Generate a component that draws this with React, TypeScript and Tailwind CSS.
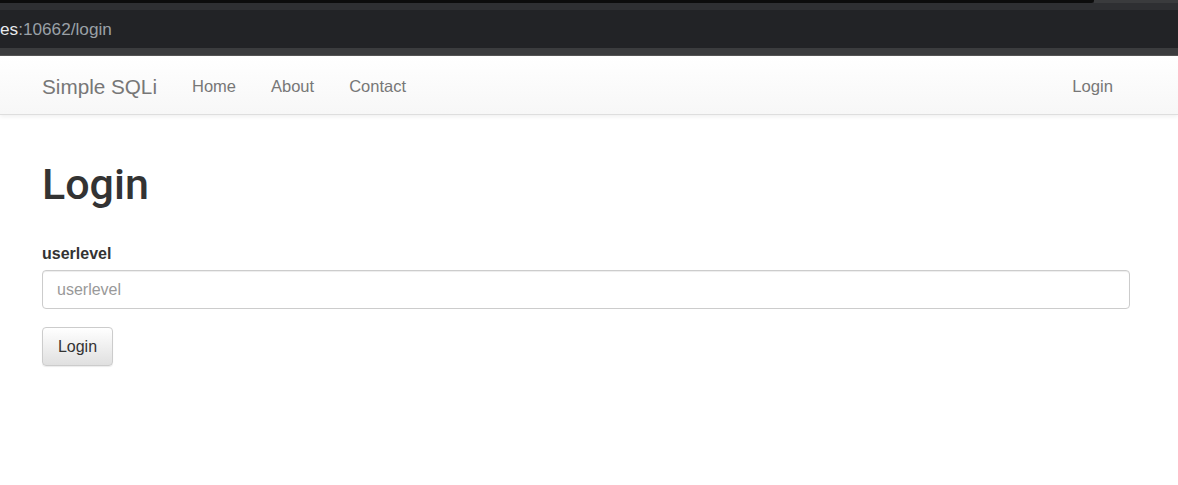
export default function App() {
  const links = ['Home', 'About', 'Contact'];
  return (
    <div className="min-h-[485px] w-full bg-white font-['Liberation_Sans',Arial,sans-serif]">
      {/* browser chrome */}
      <div className="bg-[#2a2b2e]">
        <div className="flex h-[3px]">
          <div className="flex-1 rounded-br-[6px] bg-[#0c0c0c]" />
          <div className="w-[84px] bg-[#3a3b3d]" />
        </div>
        <div className="h-[7px] bg-[#2e2f32]" />
        <div className="flex h-[38px] items-center pt-[2px] text-[17.2px] bg-[#222326]">
          <span className="text-[#e8eaed]">es</span>
          <span className="text-[#9aa0a6]">:10662/login</span>
        </div>
        <div className="h-[8px] border-b border-[#555] bg-[#3b3c3e]" />
      </div>

      {/* navbar */}
      <nav className="flex h-[59px] items-center border-b border-[#dedede] bg-gradient-to-b from-white to-[#f7f7f7] px-[42px] pt-[3px] shadow-[0_2px_4px_rgba(0,0,0,0.06)]">
        <span className="mr-[35px] text-[20.7px] text-[#777]">Simple SQLi</span>
        <div className="flex gap-[35px] text-[16.5px] text-[#777]">
          {links.map((l) => (
            <span key={l}>{l}</span>
          ))}
        </div>
        <span className="ml-auto mr-[23px] text-[16.7px] text-[#777]">Login</span>
      </nav>

      {/* content */}
      <main className="px-[42px] pr-[48px]">
        <h1 className="mt-[43px] font-['Roboto',Arial,sans-serif] text-[43px] font-medium leading-[52px] text-[#333]">
          Login
        </h1>
        <label className="mt-[32px] block text-[16px] font-bold text-[#333]">userlevel</label>
        <input
          placeholder="userlevel"
          className="mt-[4px] block h-[39px] w-full rounded-[4px] border border-[#ccc] px-[14px] text-[16px] text-[#555] shadow-[inset_0_1px_1px_rgba(0,0,0,0.075)] outline-none placeholder:text-[#999]"
        />
        <button className="mt-[18px] h-[39px] w-[71px] rounded-[4px] border border-[#ccc] bg-gradient-to-b from-white to-[#e0e0e0] text-[16px] text-[#333] shadow-[0_1px_1px_rgba(0,0,0,0.08)]">
          Login
        </button>
      </main>
    </div>
  );
}
